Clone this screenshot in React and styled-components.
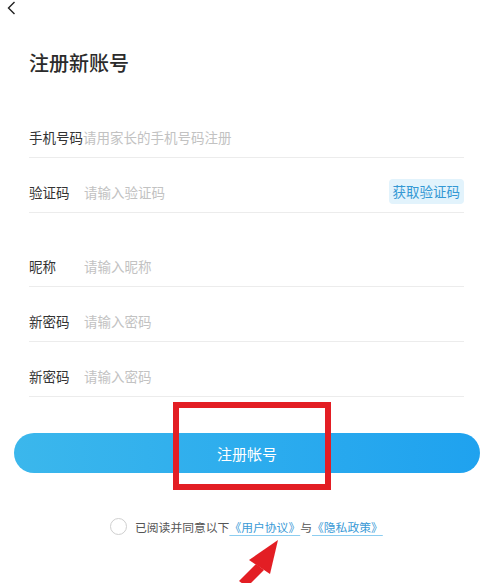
import React from 'react';
import styled, { createGlobalStyle } from 'styled-components';

const GlobalStyle = createGlobalStyle`
  html, body {
    margin: 0;
    padding: 0;
    background: #ffffff;
  }
  body {
    font-family: "Noto Sans CJK SC", "Noto Sans", sans-serif;
    color: #333;
  }
`;

const fields = [
  { label: '手机号码', placeholder: '请用家长的手机号码注册', tight: true },
  { label: '验证码', placeholder: '请输入验证码', action: '获取验证码' },
  { label: '昵称', placeholder: '请输入昵称', gapBefore: true },
  { label: '新密码', placeholder: '请输入密码' },
  { label: '新密码', placeholder: '请输入密码' },
];

const App = () => (
  <Page>
    <GlobalStyle />
    <TopBar>
      <BackButton aria-label="返回">
        <svg width="9" height="14" viewBox="0 0 9 14">
          <path d="M7.5 1 L1.5 7 L7.5 13" fill="none" stroke="#222" strokeWidth="1.4" />
        </svg>
      </BackButton>
    </TopBar>

    <Title>注册新账号</Title>

    <Form>
      {fields.map((f, i) => (
        <Row key={i} $gapBefore={f.gapBefore}>
          <Label $tight={f.tight}>{f.label}</Label>
          <Placeholder>{f.placeholder}</Placeholder>
          {f.action && <CodeButton>{f.action}</CodeButton>}
        </Row>
      ))}
    </Form>

    <SubmitButton>注册帐号</SubmitButton>

    <Agreement>
      <Radio />
      <AgreeText>已阅读并同意以下</AgreeText>
      <Link>《用户协议》</Link>
      <AgreeText>与</AgreeText>
      <Link>《隐私政策》</Link>
    </Agreement>

    {/* annotation overlays */}
    <Highlight />
    <Arrow width="40" height="44" viewBox="0 0 40 44">
      <path d="M14 25 L22 31 L5 48 L-3 42 Z" fill="#e31e24" />
      <path d="M36 1 L7 21 L28 35 Z" fill="#e31e24" />
    </Arrow>
  </Page>
);

// --- STYLES ---

const Page = styled.div`
  position: relative;
  width: 486px;
  height: 583px;
  overflow: hidden;
  background: #fff;
`;

const TopBar = styled.div`
  height: 20px;
  display: flex;
  align-items: flex-start;
  padding-left: 7px;
`;

const BackButton = styled.div`
  padding-top: 1px;
  display: flex;
`;

const Title = styled.h1`
  margin: 29px 0 0 29px;
  font-size: 20px;
  line-height: 28px;
  font-weight: 500;
  color: #2b2b2b;
`;

const Form = styled.div`
  margin-top: 26px;
  padding: 0 22px 0 29px;
`;

const Row = styled.div`
  height: 55px;
  box-sizing: border-box;
  padding-top: 14px;
  border-bottom: 1px solid #ececec;
  display: flex;
  align-items: center;
  margin-top: ${(p) => (p.$gapBefore ? '19px' : '0')};
`;

const Label = styled.span`
  width: ${(p) => (p.$tight ? 'auto' : '55px')};
  flex-shrink: 0;
  font-size: 13.5px;
  color: #333;
`;

const Placeholder = styled.span`
  flex: 1;
  font-size: 13.5px;
  color: #c2c2c2;
`;

const CodeButton = styled.span`
  height: 25px;
  line-height: 25px;
  padding: 0 4px;
  border-radius: 4px;
  background: #e2f3fc;
  color: #3498d4;
  font-size: 13.5px;
  margin-top: -2px;
`;

const SubmitButton = styled.div`
  margin: 36px 6px 0 14px;
  height: 40px;
  border-radius: 20px;
  background: linear-gradient(90deg, #3bb7ec 0%, #1fa2ef 100%);
  color: #fff;
  font-size: 15px;
  display: flex;
  align-items: center;
  justify-content: center;
`;

const Agreement = styled.div`
  margin-top: 45px;
  padding-left: 110px;
  display: flex;
  align-items: center;
  height: 17px;
  font-size: 11.8px;
`;

const Radio = styled.span`
  width: 17px;
  height: 17px;
  box-sizing: border-box;
  border-radius: 50%;
  border: 1px solid #cfcfcf;
  margin-right: 8px;
`;

const AgreeText = styled.span`
  color: #555;
`;

const Link = styled.span`
  color: #3a9ad6;
  text-decoration: underline;
  text-decoration-color: #8ccdf0;
  text-underline-offset: 3px;
`;

const Highlight = styled.div`
  position: absolute;
  left: 173px;
  top: 402px;
  width: 158px;
  height: 88px;
  box-sizing: border-box;
  border: 6px solid #e31e24;
`;

const Arrow = styled.svg`
  position: absolute;
  left: 242px;
  top: 539px;
  overflow: visible;
`;

export default App;
